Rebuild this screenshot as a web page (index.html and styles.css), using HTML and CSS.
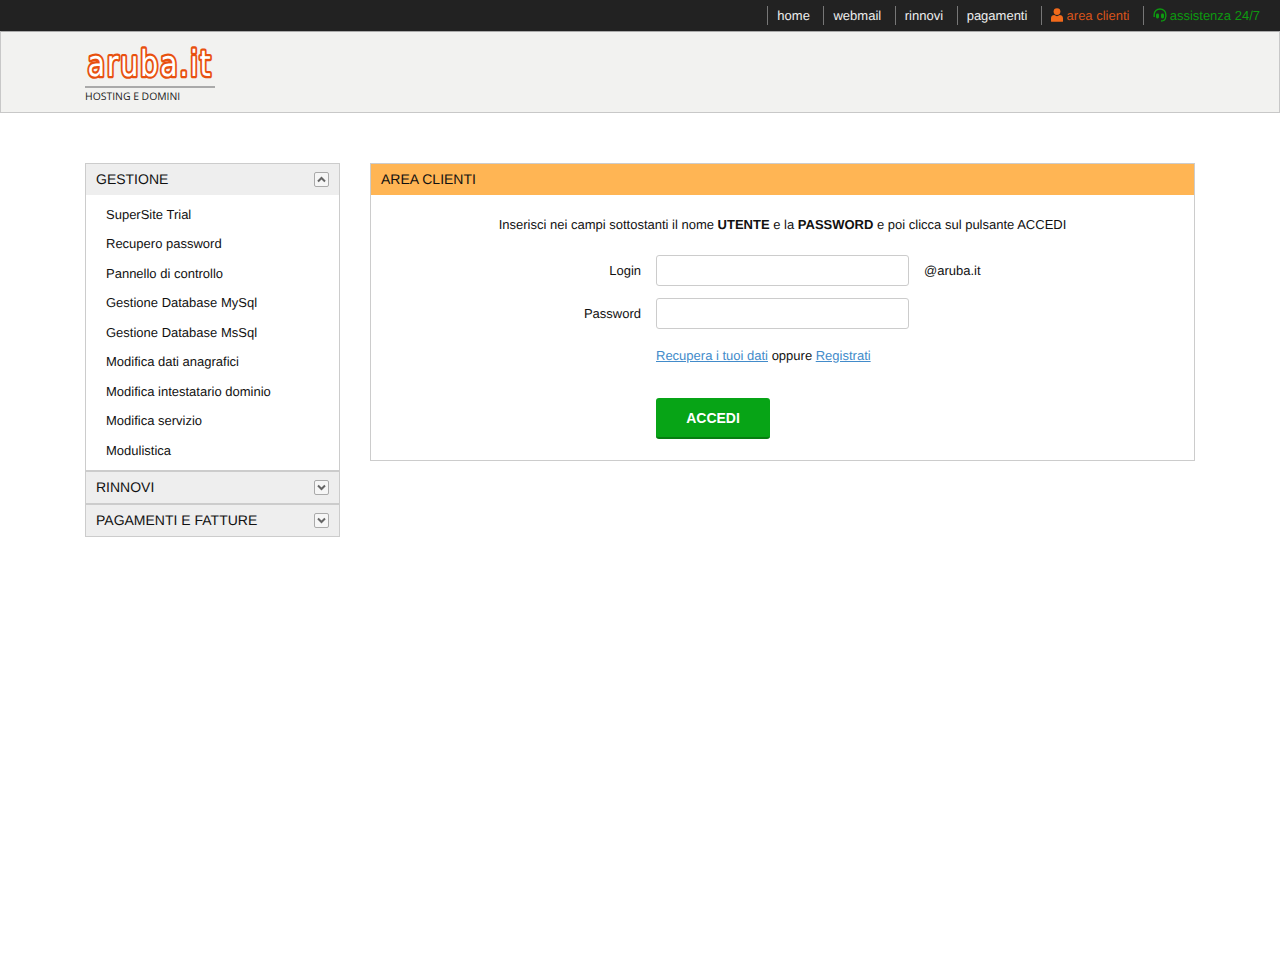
FILE: index.html

```html
<!DOCTYPE html>
<html lang="it">
<head>
<meta charset="UTF-8">
<title>Area Clienti - Aruba.it</title>
<link rel="stylesheet" href="styles.css">
</head>
<body>
  <div class="topbar">
    <a class="toplink" href="#">home</a>
    <a class="toplink" href="#">webmail</a>
    <a class="toplink" href="#">rinnovi</a>
    <a class="toplink" href="#">pagamenti</a>
    <a class="toplink orange" href="#">
      <svg class="topicon" width="12" height="14" viewBox="0 0 12 14"><circle cx="6" cy="3.6" r="3.4" fill="#f26a1b"/><path d="M0 13.2V10.2C0 8.2 1.6 7 3.2 7L6 8.2 8.8 7C10.4 7 12 8.2 12 10.2V13.2C12 13.6 11.7 13.8 11.4 13.8H.6C.3 13.8 0 13.6 0 13.2Z" fill="#f26a1b"/></svg>
      area clienti</a>
    <a class="toplink green" href="#">
      <svg class="topicon headset" width="14" height="14" viewBox="0 0 14 14" fill="none"><path d="M1.2 9V6.6C1.2 3.4 3.8 1 7 1S12.8 3.4 12.8 6.6V9" stroke="#0d9a10" stroke-width="1.4"/><rect x="3" y="5.4" width="3" height="5" rx="1.3" fill="#0d9a10"/><rect x="8" y="5.4" width="3" height="5" rx="1.3" fill="#0d9a10"/><path d="M12.6 9C12.6 11.8 11 13 8 13" stroke="#0d9a10" stroke-width="1.3"/></svg>
      assistenza 24/7</a>
  </div>

  <div class="header">
    <div class="logo">
      <svg class="logo-word" width="130" height="44" viewBox="0 0 130 44"><text transform="translate(2.5 34) scale(.8 1)" class="logo-text">aruba.it</text></svg>
      <div class="logo-sub">HOSTING E DOMINI</div>
    </div>
  </div>

  <div class="content">
    <div class="sidebar">
      <div class="side-head">GESTIONE
        <span class="toggle"><svg width="9" height="7" viewBox="0 0 9 7"><path d="M1 5.5L4.5 2 8 5.5" fill="none" stroke="#666" stroke-width="2"/></svg></span>
      </div>
      <ul class="side-menu">
        <li><a href="#">SuperSite Trial</a></li>
        <li><a href="#">Recupero password</a></li>
        <li><a href="#">Pannello di controllo</a></li>
        <li><a href="#">Gestione Database MySql</a></li>
        <li><a href="#">Gestione Database MsSql</a></li>
        <li><a href="#">Modifica dati anagrafici</a></li>
        <li><a href="#">Modifica intestatario dominio</a></li>
        <li><a href="#">Modifica servizio</a></li>
        <li><a href="#">Modulistica</a></li>
      </ul>
      <div class="side-head closed">RINNOVI
        <span class="toggle"><svg width="9" height="7" viewBox="0 0 9 7"><path d="M1 1.5L4.5 5 8 1.5" fill="none" stroke="#666" stroke-width="2"/></svg></span>
      </div>
      <div class="side-head closed">PAGAMENTI E FATTURE
        <span class="toggle"><svg width="9" height="7" viewBox="0 0 9 7"><path d="M1 1.5L4.5 5 8 1.5" fill="none" stroke="#666" stroke-width="2"/></svg></span>
      </div>
    </div>

    <div class="panel">
      <div class="panel-title">AREA CLIENTI</div>
      <div class="panel-body">
        <p class="intro">Inserisci nei campi sottostanti il nome <b>UTENTE</b> e la <b>PASSWORD</b> e poi clicca sul pulsante ACCEDI</p>
        <form class="login-form">
          <div class="form-row">
            <label for="login">Login</label>
            <input type="text" id="login">
            <span class="domain">@aruba.it</span>
          </div>
          <div class="form-row">
            <label for="password">Password</label>
            <input type="password" id="password">
          </div>
          <div class="form-links"><a href="#">Recupera i tuoi dati</a> oppure <a href="#">Registrati</a></div>
          <button type="button" class="btn-login">ACCEDI</button>
        </form>
      </div>
    </div>
  </div>
</body>
</html>
```

FILE: styles.css

```css
body {
  font-family: "Liberation Sans", Arial, sans-serif;
  font-size: 13px;
  color: #111;
  background-color: #fff;
  margin: 0;
  text-rendering: geometricPrecision;
}
a {
  text-decoration: none;
  color: inherit;
}

.topbar {
  background-color: #222;
  height: 31px;
  display: flex;
  justify-content: flex-end;
  align-items: flex-start;
  padding: 6px 20px 0 0;
  box-sizing: border-box;
}
.toplink {
  height: 19px;
  line-height: 19px;
  border-left: 1px solid #777;
  padding: 0 13.6px 0 9px;
  color: #eee;
  white-space: nowrap;
}
.toplink:last-child {
  padding-right: 0;
}
.toplink.orange {
  color: #d9541a;
}
.toplink.green {
  color: #0d9a10;
}
.topicon {
  vertical-align: -2px;
}
.topicon.headset {
  margin-right: -1px;
}

.header {
  background-color: #f2f2f0;
  border: 1px solid #c8c8c8;
  border-top-color: #aaa;
  height: 82px;
  box-sizing: border-box;
  padding: 10px 0 0 84px;
}
.logo {
  width: 130px;
}
.logo-word {
  display: block;
  height: 44px;
  overflow: visible;
}
.logo-text {
  font-family: "DejaVu Sans", sans-serif;
  font-size: 36px;
  letter-spacing: 2px;
  fill: #fff;
  stroke: #e8500f;
  stroke-width: 4.6px;
  stroke-linejoin: round;
  paint-order: stroke;
}
.logo-sub {
  border-top: 2px solid #aaa;
  font-family: "Open Sans", sans-serif;
  font-size: 10.4px;
  line-height: 14px;
  color: #222;
  padding-top: 2px;
  white-space: nowrap;
}

.content {
  display: flex;
  align-items: flex-start;
  gap: 30px;
  margin: 50px 85px 0;
}

.sidebar {
  width: 255px;
  box-sizing: border-box;
  border: 1px solid #ccc;
}
.side-head {
  display: flex;
  justify-content: space-between;
  align-items: center;
  height: 31px;
  box-sizing: border-box;
  padding: 0 10px 1px;
  background-color: #eee;
  font-size: 14px;
}
.side-head.closed {
  height: 33px;
  border-top: 2px solid #ccc;
}
.toggle {
  display: flex;
  align-items: center;
  justify-content: center;
  width: 13px;
  height: 13px;
  border: 1px solid #aaa;
  border-radius: 2px;
  background-color: #f6f6f6;
}
.side-menu {
  list-style: none;
  margin: 0;
  padding: 4.5px 0 0 20px;
  height: 275px;
  box-sizing: border-box;
}
.side-menu li {
  height: 29.5px;
  line-height: 29.5px;
}

.panel {
  width: 825px;
  box-sizing: border-box;
  border: 1px solid #ccc;
}
.panel-title {
  background-color: #ffb554;
  height: 31px;
  line-height: 31px;
  padding-left: 10px;
  font-size: 14px;
}
.panel-body {
  height: 265px;
  box-sizing: border-box;
  padding-top: 22px;
}
.intro {
  margin: 0 0 23px;
  text-align: center;
  line-height: 15px;
}
.form-row {
  display: flex;
  align-items: center;
  margin-bottom: 12px;
}
.form-row label {
  width: 270px;
  text-align: right;
  margin-right: 15px;
}
.form-row input {
  width: 253px;
  height: 31px;
  box-sizing: border-box;
  border: 1px solid #ccc;
  border-radius: 3px;
  padding: 4px 8px;
  background-color: #fff;
  outline: none;
}
.domain {
  margin-left: 15px;
}
.form-links {
  margin: 19px 0 0 285px;
  line-height: 15px;
}
.form-links a {
  color: #428bca;
  text-decoration: underline;
}
.btn-login {
  display: block;
  margin: 35px 0 0 285px;
  width: 114px;
  height: 41px;
  background-color: #07a416;
  border: none;
  border-bottom: 2px solid #067d10;
  border-radius: 3px;
  color: #fff;
  font-family: "Liberation Sans", Arial, sans-serif;
  font-size: 14px;
  font-weight: 700;
  cursor: pointer;
}
```
